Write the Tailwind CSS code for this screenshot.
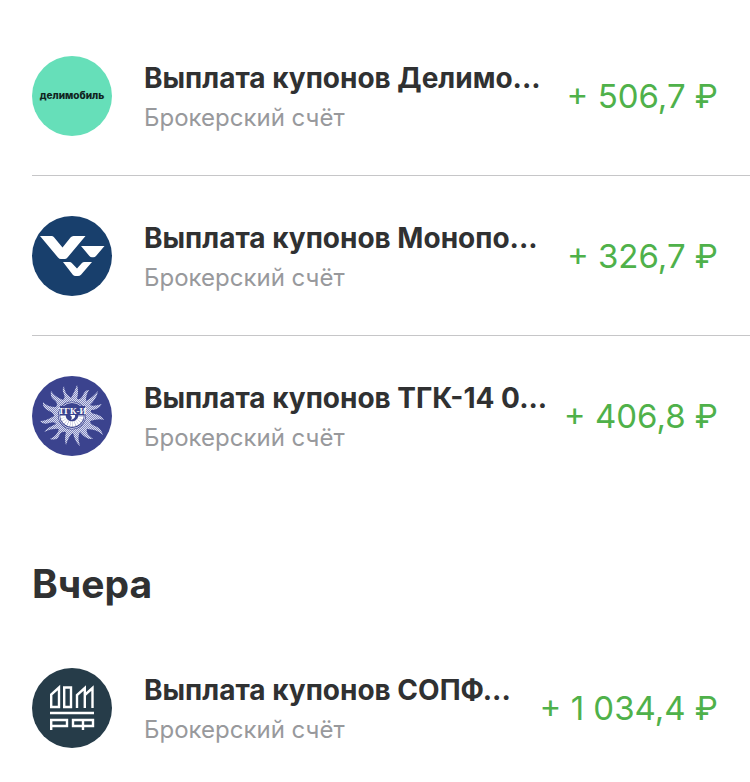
<!DOCTYPE html>
<html lang="ru">
<head>
    <meta charset="UTF-8">
    <meta name="viewport" content="width=device-width, initial-scale=1.0">
    <title>История операций</title>
    <script src="https://cdn.jsdelivr.net/npm/@tailwindcss/browser@4"></script>
</head>
<body class="bg-white font-['Inter','Liberation_Sans',sans-serif] text-[#303132]">
    <main class="pt-4 pl-8">
        <ul>
            <li class="flex items-center h-40 pr-8 border-b border-[#c6c6c8]">
                <div class="size-20 shrink-0 rounded-full bg-[#66dfb9] flex items-center justify-center text-[10px] font-extrabold text-[#10251f]">делимобиль</div>
                <div class="ml-8 pt-1 min-w-0 flex-1">
                    <h3 class="text-[28px] leading-10 font-bold whitespace-nowrap">Выплата купонов Делимо...</h3>
                    <p class="text-2xl leading-10 text-[#98999c]">Брокерский счёт</p>
                </div>
                <p class="ml-4 shrink-0 text-[33px] leading-10 text-[#4fb14a]">+ 506,7 ₽</p>
            </li>
            <li class="flex items-center h-40 pr-8 border-b border-[#c6c6c8]">
                <svg class="size-20 shrink-0" viewBox="0 0 80 80" aria-hidden="true">
                    <circle cx="40" cy="40" r="40" fill="#183f6c"/>
                    <g fill="#fff">
                        <path d="M8 20H19.500Q21 20 22 21.300L30.500 31.500L38.500 21.500Q39.700 20 41.500 20H53.500L35.500 41.500Q34.300 43 32.500 43H29Q27.300 43 26 41.500Z"/>
                        <path d="M49 30H72.500L64 40Q62.900 41.300 61.500 41.300H60Q58.500 41.300 57.400 40Z"/>
                        <path d="M31 46H37.500Q39 46 40 47.200L45 52.500L49.700 47.200Q50.800 46 52.500 46H60L49 58.700Q47.700 60 46 60H43.500Q42 60 40.800 58.700Z"/>
                    </g>
                </svg>
                <div class="ml-8 pt-1 min-w-0 flex-1">
                    <h3 class="text-[28px] leading-10 font-bold whitespace-nowrap">Выплата купонов Монопо...</h3>
                    <p class="text-2xl leading-10 text-[#98999c]">Брокерский счёт</p>
                </div>
                <p class="ml-4 shrink-0 text-[33px] leading-10 text-[#4fb14a]">+ 326,7 ₽</p>
            </li>
            <li class="flex items-center h-40 pr-8">
                <svg class="size-20 shrink-0" viewBox="0 0 80 80" role="img" aria-label="ТГК-14">
                    <defs>
                        <pattern id="dots" width="2" height="2" patternUnits="userSpaceOnUse">
                            <rect width="2" height="2" fill="#8188bf"/>
                            <path d="M0 0H1V1H0ZM1 1H2V2H1Z" fill="#d9dbef"/>
                        </pattern>
                    </defs>
                    <circle cx="40" cy="40" r="40" fill="#3b438e"/>
                    <!-- sun with curved rays -->
                    <path fill="url(#dots)" d="M32 10Q32 17 39 22Q42 17 45 9Q47 15 45 23Q49 24 51 19Q53 14 57 14Q54 18 54 25Q60 22 66 15Q65 22 58 29Q61 31 70 28Q66 34 59 34Q58 37 63 38Q69 39 72 44Q67 42 58 45Q58 48 63 50Q69 52 71 59Q65 53 55 53Q53 57 61 63Q54 64 48 56Q45 60 48 70Q43 66 41 57Q37 59 34 69Q32 64 34 56Q29 55 27 60Q25 65 18 63Q25 60 27 53Q20 52 12 56Q16 51 24 48Q23 45 17 47Q11 49 8 45Q14 45 22 40Q22 37 17 35Q10 32 11 26Q15 31 24 31Q27 27 21 23Q18 20 19 15Q23 21 31 24Q34 21 31 16Q30 13 32 10Z"/>
                    <circle cx="40" cy="39.500" r="14" fill="#3b438e"/>
                    <circle cx="40" cy="39.500" r="13" fill="none" stroke="#c9cce8" stroke-width="1"/>
                    <path d="M31 39.500A9 8.500 0 0 0 49 39.500" fill="none" stroke="#fff" stroke-width="5.500" stroke-dasharray="2.200 .2"/>
                    <path d="M38 39H43Q44 42 39 44Q41 41 38 39Z" fill="#fff"/>
                    <rect x="28" y="30" width="25" height="8.500" fill="#3b438e"/>
                    <text x="40.500" y="38" text-anchor="middle" font-family="Liberation Serif, serif" font-size="9" font-weight="700" fill="#fff">ТГК-И</text>
                </svg>
                <div class="ml-8 pt-1 min-w-0 flex-1">
                    <h3 class="text-[28px] leading-10 font-bold whitespace-nowrap">Выплата купонов ТГК-14 0...</h3>
                    <p class="text-2xl leading-10 text-[#98999c]">Брокерский счёт</p>
                </div>
                <p class="ml-4 shrink-0 text-[33px] leading-10 text-[#4fb14a]">+ 406,8 ₽</p>
            </li>
        </ul>
        <h2 class="pt-16 pb-5 text-[39px] leading-12 font-bold">Вчера</h2>
        <ul>
            <li class="flex items-center h-40 pr-8">
                <svg class="size-20 shrink-0" viewBox="0 0 80 80" aria-hidden="true">
                    <circle cx="40" cy="40" r="40" fill="#263c49"/>
                    <g fill="none" stroke="#fff" stroke-width="2.400">
                        <path d="M19.200 39V26.500L27 19.500V39ZM32.200 19.500H39V39H32.200Z"/>
                        <path d="M45 40V27L52.800 20V40M52.800 27L60.500 20V40"/>
                        <path d="M18 45H62"/>
                        <path d="M19.200 62V52H35V58H19.200M41 52H61V58H41ZM51 51V62"/>
                    </g>
                </svg>
                <div class="ml-8 pt-1 min-w-0 flex-1">
                    <h3 class="text-[28px] leading-10 font-bold whitespace-nowrap">Выплата купонов СОПФ...</h3>
                    <p class="text-2xl leading-10 text-[#98999c]">Брокерский счёт</p>
                </div>
                <p class="ml-4 shrink-0 text-[33px] leading-10 text-[#4fb14a]">+ 1 034,4 ₽</p>
            </li>
        </ul>
    </main>
</body>
</html>
